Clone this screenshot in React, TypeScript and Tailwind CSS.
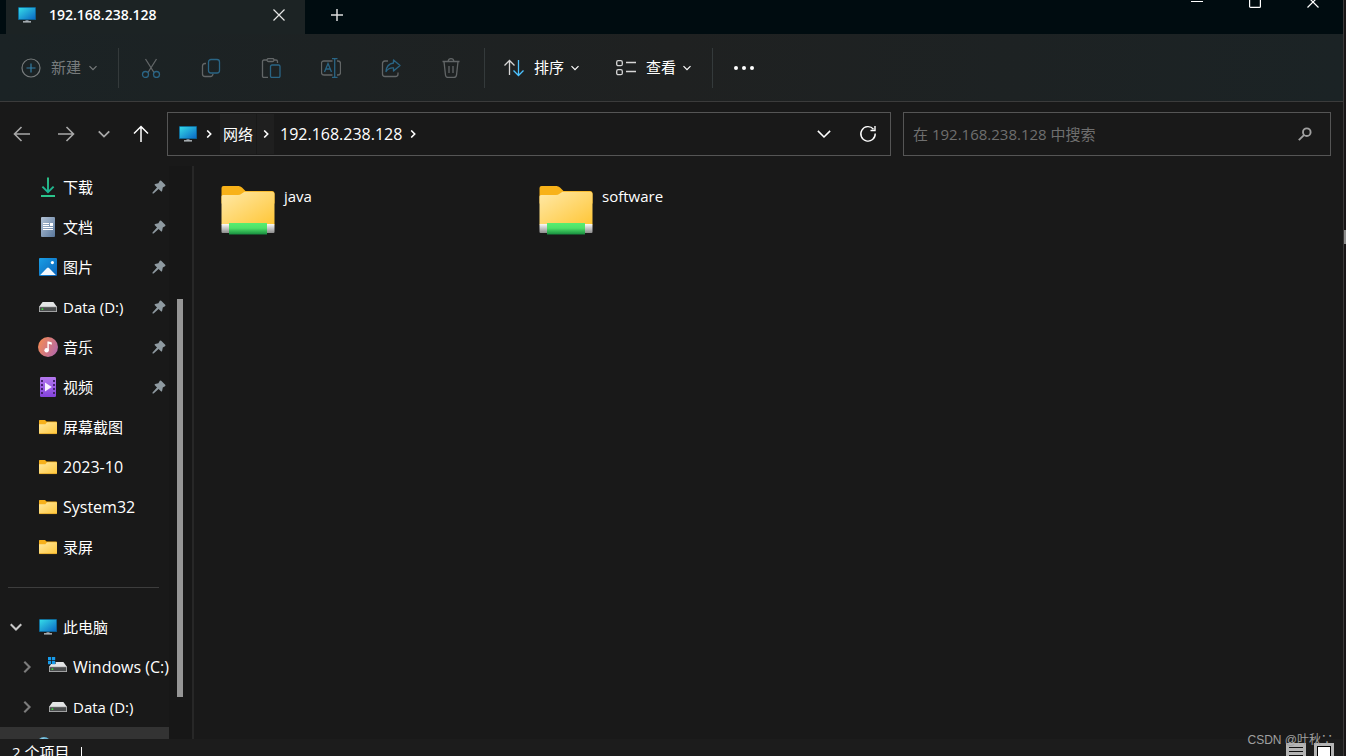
import type { ReactNode } from "react";

interface PlaceItem {
  id: string;
  label: string;
  icon: ReactNode;
  pinned?: boolean;
  latin?: boolean;
}

const MonitorIcon = () => (
  <svg width="20" height="20" viewBox="0 0 20 20" className="shrink-0">
    <defs>
      <linearGradient id="screen" x1="0" y1="0" x2="1" y2="1">
        <stop offset="0" stopColor="#35dbe8" />
        <stop offset="1" stopColor="#0a68c4" />
      </linearGradient>
    </defs>
    <rect x="1" y="2" width="18" height="13" rx="0.6" fill="#0b5a86" />
    <rect x="1.8" y="2.8" width="16.4" height="11.4" fill="url(#screen)" />
    <path d="M8.5 15h3v1.5h-3z" fill="#76818a" />
    <path d="M6 16.2h8v1.3H6z" fill="#c3cace" />
  </svg>
);

const FolderIcon = () => (
  <svg width="20" height="20" viewBox="0 0 20 20" className="shrink-0">
    <defs>
      <linearGradient id="folder" x1="0" y1="0" x2="1" y2="1">
        <stop offset="0" stopColor="#ffe9a3" />
        <stop offset="1" stopColor="#ffc73a" />
      </linearGradient>
    </defs>
    <path d="M1 3.6Q1 3 1.6 3H7l1.6 1.6H18q1 0 1 1V9H1z" fill="#f7b01b" />
    <path d="M1 7.2h6.4L9 5.2h9.2q.8 0 .8.8v10.2q0 .8-.8.8H1.8q-.8 0-.8-.8z" fill="url(#folder)" />
    <path d="M1.4 16.6h17.2" stroke="#e3a72a" strokeWidth="0.8" />
  </svg>
);

const DriveIcon = ({ system = false }: { system?: boolean }) => (
  <svg width="20" height="20" viewBox="0 0 20 20" className="shrink-0 overflow-visible">
    <path d="M4.6 5h10.8l3.6 5H1z" fill="#e4e5e6" />
    <rect x="1" y="9.6" width="18" height="5.4" rx="0.5" fill="#b5b6b7" />
    <rect x="1.8" y="10.2" width="16.4" height="4" fill="#4a4c4d" />
    <rect x="3.6" y="11.4" width="1.6" height="1.6" fill="#3be03b" />
    {system && (
      <>
        <path d="M-1-1h8.6v8H-1z" fill="#191919" />
        <path d="M0 0h3.2v3.2H0zM4 0h3.2v3.2H4zM0 4h3.2v3.2H0zM4 4h3.2v3.2H4z" fill="#179bea" />
      </>
    )}
  </svg>
);

const DownloadIcon = () => (
  <svg width="20" height="20" viewBox="0 0 20 20" fill="none" className="shrink-0">
    <defs>
      <linearGradient id="download" x1="0" y1="0" x2="0" y2="20" gradientUnits="userSpaceOnUse">
        <stop offset="0" stopColor="#2fc489" />
        <stop offset="1" stopColor="#14ad94" />
      </linearGradient>
    </defs>
    <path d="M10 .5v15M4.4 9.6 10 15.2l5.6-5.6" stroke="url(#download)" strokeWidth="1.9" />
    <path d="M3 19h14" stroke="#2bc48c" strokeWidth="2" />
  </svg>
);

const DocumentIcon = () => (
  <svg width="20" height="20" viewBox="0 0 20 20" className="shrink-0">
    <defs>
      <linearGradient id="doc" x1="0" y1="0" x2="1" y2="1">
        <stop offset="0" stopColor="#b3c3d6" />
        <stop offset="1" stopColor="#59779c" />
      </linearGradient>
    </defs>
    <rect x="3" y="0" width="14" height="20" rx="1" fill="url(#doc)" />
    <path d="M5 6h6v1H5zM5 8h6v1H5zM12 6h3v3h-3zM5 10h10v1H5zM5 12h10v1H5z" fill="#fff" />
  </svg>
);

const PictureIcon = () => (
  <svg width="20" height="20" viewBox="0 0 20 20" className="shrink-0">
    <defs>
      <linearGradient id="picture" x1="0" y1="0" x2="1" y2="1">
        <stop offset="0" stopColor="#1a9fe6" />
        <stop offset="1" stopColor="#0a62b8" />
      </linearGradient>
    </defs>
    <rect x="1" y="1" width="18" height="18" rx="1" fill="url(#picture)" />
    <path d="M2.2 18 9 11q1-1 2 0l6.8 7z" fill="#f1f7fd" />
    <circle cx="14.4" cy="5.6" r="1.6" fill="#fff" />
  </svg>
);

const MusicIcon = () => (
  <svg width="20" height="20" viewBox="0 0 20 20" className="shrink-0">
    <defs>
      <linearGradient id="music" x1="0" y1="0.3" x2="1" y2="0.8">
        <stop offset="0" stopColor="#f28a57" />
        <stop offset="1" stopColor="#b267ac" />
      </linearGradient>
    </defs>
    <circle cx="10" cy="10" r="10" fill="url(#music)" />
    <circle cx="8.6" cy="13.2" r="2.2" fill="#fff" />
    <path d="M9.4 13.2V4.5h1.4l3 1v2.3l-3-1v6.4z" fill="#fff" />
  </svg>
);

const VideoIcon = () => (
  <svg width="20" height="20" viewBox="0 0 20 20" className="shrink-0">
    <defs>
      <linearGradient id="video" x1="0" y1="0" x2="0" y2="1">
        <stop offset="0" stopColor="#b478ee" />
        <stop offset="1" stopColor="#8443dc" />
      </linearGradient>
    </defs>
    <rect x="2" y="0" width="16" height="20" rx="1.2" fill="url(#video)" />
    <path
      d="M3 3h2v2H3zM3 7h2v2H3zM3 11h2v2H3zM3 15h2v2H3zM15 3h2v2h-2zM15 7h2v2h-2zM15 11h2v2h-2zM15 15h2v2h-2z"
      fill="#45226f"
    />
    <path d="M7 5.6v8.8l6.8-4.4z" fill="#f6effd" />
  </svg>
);

const PinIcon = () => (
  <svg width="14" height="14" viewBox="0 0 14 14" className="shrink-0" fill="#8f9aa1">
    <path d="M7.8.8q.7-.7 1.4 0l4 4q.7.8-.2 1.4L10.8 7.6l-.7 3.3q-.3 1.1-1.2.3L6.6 9 1.6 13.5H.5v-1.1L5 7.4 2.8 5.2q-.7-.9.3-1.2l3.3-.7z" />
  </svg>
);

const Chevron = ({ direction, size = 8, weight = 1.2 }: { direction: "down" | "right"; size?: number; weight?: number }) => (
  <svg width={size} height={size} viewBox="0 0 8 8" fill="none" stroke="currentColor" strokeWidth={weight} className="shrink-0">
    <path d={direction === "down" ? "M.5 2.2 4 5.7 7.5 2.2" : "M2.2.5 5.7 4 2.2 7.5"} />
  </svg>
);

const NetworkFolder = () => (
  <svg width="54" height="50" viewBox="0 0 54 50" className="shrink-0">
    <defs>
      <linearGradient id="netFolder" x1="0" y1="0" x2="1" y2="1">
        <stop offset="0" stopColor="#ffe9a8" />
        <stop offset="1" stopColor="#ffc636" />
      </linearGradient>
      <linearGradient id="tube" x1="0" y1="0" x2="0" y2="1">
        <stop offset="0" stopColor="#fafafa" />
        <stop offset="1" stopColor="#8d8d8d" />
      </linearGradient>
      <linearGradient id="cable" x1="0" y1="0" x2="0" y2="1">
        <stop offset="0" stopColor="#58ee70" />
        <stop offset="0.45" stopColor="#4fe069" />
        <stop offset="1" stopColor="#168c3e" />
      </linearGradient>
    </defs>
    <path d="M.5 3q0-2 2-2h15q2 0 3.500 1.500L24.500 6H51q2.500 0 2.500 2.500v10H.5z" fill="#f8b219" />
    <path d="M.5 11.500Q.5 10 2 10h15q2 0 3.500-1.200L23.500 6.800H51q2.500 0 2.500 2.500V40H.5z" fill="url(#netFolder)" />
    <rect x="0.5" y="39" width="53" height="9" rx="1" fill="url(#tube)" />
    <rect x="8" y="38" width="38" height="11.5" fill="url(#cable)" />
  </svg>
);

const quickAccess: PlaceItem[] = [
  { id: "downloads", label: "下载", icon: <DownloadIcon />, pinned: true },
  { id: "documents", label: "文档", icon: <DocumentIcon />, pinned: true },
  { id: "pictures", label: "图片", icon: <PictureIcon />, pinned: true },
  { id: "data", label: "Data (D:)", icon: <DriveIcon />, pinned: true },
  { id: "music", label: "音乐", icon: <MusicIcon />, pinned: true },
  { id: "videos", label: "视频", icon: <VideoIcon />, pinned: true },
  { id: "screenshots", label: "屏幕截图", icon: <FolderIcon /> },
  { id: "2023-10", label: "2023-10", icon: <FolderIcon />, latin: true },
  { id: "system32", label: "System32", icon: <FolderIcon />, latin: true },
  { id: "recordings", label: "录屏", icon: <FolderIcon /> },
];

const drives: PlaceItem[] = [
  { id: "c", label: "Windows (C:)", icon: <DriveIcon system />, latin: true },
  { id: "d", label: "Data (D:)", icon: <DriveIcon /> },
];

const folders = ["java", "software"];

// Disabled commands, grey strokes with a dim blue accent
const commands = [
  {
    label: "剪切",
    art: (
      <>
        <path d="M4.5 1 13 14.5M15.5 1 7 14.5" />
        <g stroke="#2a6585">
          <circle cx="4.5" cy="16.5" r="3" />
          <circle cx="15.5" cy="16.5" r="3" />
        </g>
      </>
    ),
  },
  {
    label: "复制",
    art: (
      <>
        <path d="M5 5.5H4Q1.5 5.5 1.5 8v8q0 2.500 2.500 2.500h5.500q2.200 0 2.500-2.500" />
        <rect x="7.5" y="1.5" width="11" height="13.5" rx="2.5" stroke="#2a6585" />
      </>
    ),
  },
  {
    label: "粘贴",
    art: (
      <>
        <path d="M7 19.500H3q-1.500 0-1.500-1.500V3.500Q1.500 2 3 2h3M13 2h2q1.500 0 1.500 1.500V5" />
        <rect x="6" y="0.5" width="7" height="3" rx="1.5" />
        <rect x="9.5" y="7" width="9.5" height="12.5" rx="1.5" stroke="#2a6585" />
      </>
    ),
  },
  {
    label: "重命名",
    art: (
      <>
        <path d="M11.500 3H3Q.5 3 .5 5.500v9Q.5 17 3 17h8.500M16 3h1q2.500 0 2.500 2.500v9q0 2.500-2.500 2.500h-1" />
        <path d="M3.500 14 7 5.500l3.500 8.500M4.800 11h4.500M11 .5h5.500M11 19.500h5.500M13.700.5v19" stroke="#2a6585" />
      </>
    ),
  },
  {
    label: "共享",
    art: (
      <>
        <path d="M7 3H4Q1.500 3 1.500 5.500V16q0 2.500 2.500 2.500h10.500q2.500 0 2.500-2.500v-1.500" />
        <path d="M12.500 2 19 7.500 12.500 13v-3q-4.500-.5-7.500 3.500.5-7.500 7.500-8.500z" stroke="#2a6585" strokeLinejoin="round" />
      </>
    ),
  },
  {
    label: "删除",
    art: (
      <path d="M1.500 3.500h17M7 3.500Q7.500.7 10 .7t3 2.800M3 3.500l1.500 13.700q.3 2.300 2.500 2.300h6q2.200 0 2.500-2.300L17 3.500M8 8v7M12 8v7" />
    ),
  },
];

const Separator = () => <div className="mr-0.5 h-10 w-px bg-[#343a3b]" />;

const TitleBar = () => (
  <header className="flex h-[34px] shrink-0 bg-[#000c10] pl-1.5">
    <div className="flex w-[299px] items-center bg-[#1c2324] pb-1 pl-[11px] pr-4">
      <MonitorIcon />
      <span className="ml-3 text-sm font-semibold">192.168.238.128</span>
      <button aria-label="关闭标签页" className="ml-auto flex size-5 items-center justify-center">
        <svg width="12" height="12" viewBox="0 0 12 12" stroke="#e6e6e6" strokeWidth="1.2">
          <path d="M.5.5l11 11M11.5.5l-11 11" />
        </svg>
      </button>
    </div>
    <button aria-label="新建标签页" className="ml-[22px] flex w-5 items-center justify-center pb-1">
      <svg width="12" height="12" viewBox="0 0 12 12" stroke="#dcdcdc" strokeWidth="1.5">
        <path d="M6 0v12M0 6h12" />
      </svg>
    </button>
    <div className="-mt-1 ml-auto flex items-start pr-px">
      <button aria-label="最小化" className="flex w-[58px] justify-center">
        <svg width="12" height="12" viewBox="0 0 12 12" stroke="#fff">
          <path d="M0 5.5h12" />
        </svg>
      </button>
      <button aria-label="最大化" className="flex w-[58px] justify-center">
        <svg width="12" height="12" viewBox="0 0 12 12" fill="none" stroke="#fff" strokeWidth="1.2">
          <rect x="0.6" y="0.6" width="10.8" height="10.8" rx="1" />
        </svg>
      </button>
      <button aria-label="关闭" className="flex w-[58px] justify-center">
        <svg width="12" height="12" viewBox="0 0 12 12" stroke="#fff" strokeWidth="1.2">
          <path d="M.5.5l11 11M11.5.5l-11 11" />
        </svg>
      </button>
    </div>
  </header>
);

const Toolbar = () => (
  <div className="flex h-[68px] shrink-0 items-center border-b border-[#3b3b3b] bg-linear-to-r from-[#1b2325] via-[#1f2121] to-[#1b2325] text-[15px]">
    <button disabled className="flex items-center px-[21px] text-[#777b7c]">
      <svg width="20" height="20" viewBox="0 0 20 20" fill="none" stroke="currentColor" strokeWidth="1.2">
        <circle cx="10" cy="10" r="9" />
        <path d="M10 5.5v9M5.5 10h9" stroke="#347da3" />
      </svg>
      <span className="ml-2.5 mr-2">新建</span>
      <Chevron direction="down" />
    </button>
    <Separator />
    <div className="flex pr-[3px]">
      {commands.map((command) => (
        <button key={command.label} disabled aria-label={command.label} className="flex w-15 justify-center">
          <svg width="20" height="20" viewBox="0 0 20 20" fill="none" stroke="#626667" strokeWidth="1.3">
            {command.art}
          </svg>
        </button>
      ))}
    </div>
    <Separator />
    <button className="flex items-center px-[17px]">
      <svg width="20" height="20" viewBox="0 0 20 20" fill="none" stroke="#d6d6d6" strokeWidth="1.3">
        <path d="M5.5 17V2.5M.5 7.5l5-5 5 5" />
        <path d="M14.5 2v15.5M9.500 12.500l5 5 5-5" stroke="#4cc2ff" />
      </svg>
      <span className="ml-2.5 mr-[7px]">排序</span>
      <Chevron direction="down" />
    </button>
    <button className="flex items-center pl-5 pr-[21px]">
      <svg width="20" height="20" viewBox="0 0 20 20" fill="none" stroke="#d6d6d6" strokeWidth="1.3">
        <rect x="0.7" y="2.7" width="5.6" height="5" rx="1.5" />
        <rect x="0.7" y="11.7" width="5.6" height="5" rx="1.5" />
        <path d="M10 4.5h10M10 13.5h10" />
      </svg>
      <span className="ml-2.5 mr-[7px]">查看</span>
      <Chevron direction="down" />
    </button>
    <Separator />
    <button aria-label="查看更多" className="flex w-[58px] justify-center">
      <svg width="22" height="6" viewBox="0 0 22 6" fill="#fff">
        <circle cx="3" cy="3" r="2" />
        <circle cx="11" cy="3" r="2" />
        <circle cx="19" cy="3" r="2" />
      </svg>
    </button>
  </div>
);

const NavigationBar = () => (
  <div className="flex h-16 shrink-0 items-center pr-3">
    <button aria-label="后退" className="flex w-11 justify-center text-[#a8a8a8]">
      <svg width="18" height="18" viewBox="0 0 18 18" fill="none" stroke="currentColor" strokeWidth="1.6">
        <path d="M17 9H1.5M8.5 2l-7 7 7 7" />
      </svg>
    </button>
    <button aria-label="前进" className="flex w-11 justify-center text-[#a8a8a8]">
      <svg width="18" height="18" viewBox="0 0 18 18" fill="none" stroke="currentColor" strokeWidth="1.6">
        <path d="M1 9h15.5M9.5 2l7 7-7 7" />
      </svg>
    </button>
    <button aria-label="最近位置" className="flex w-8 justify-center text-[#a8a8a8]">
      <Chevron direction="down" size={12} />
    </button>
    <button aria-label="上移" className="flex w-[42px] justify-center">
      <svg width="18" height="18" viewBox="0 0 18 18" fill="none" stroke="currentColor" strokeWidth="1.5">
        <path d="M9 17V1.5M2 8.5l7-7 7 7" />
      </svg>
    </button>
    <div className="ml-[5px] grid flex-1 grid-cols-[724fr_428fr] gap-3">
      <div className="flex h-11 items-center border border-[#555] pl-2.5">
        <MonitorIcon />
        <span className="flex w-[22px] justify-center">
          <Chevron direction="right" weight={1.6} />
        </span>
        <a href="#network" className="flex h-10 items-center bg-[#1f1f1f] px-[3px] text-[15px]">
          网络
        </a>
        <button aria-label="展开网络" className="ml-px flex h-10 w-[17px] items-center justify-center bg-[#1f1f1f]">
          <Chevron direction="right" weight={1.6} />
        </button>
        <a href="#host" className="ml-1.5 text-base">
          192.168.238.128
        </a>
        <span className="ml-[7px]">
          <Chevron direction="right" weight={1.6} />
        </span>
        <button aria-label="历史记录" className="ml-auto flex w-11 justify-center">
          <Chevron direction="down" size={14} weight={0.9} />
        </button>
        <button aria-label="刷新" className="flex w-11 justify-center">
          <svg width="18" height="18" viewBox="0 0 18 18" fill="none" stroke="currentColor" strokeWidth="1.4">
            <path d="M16.2 8.5A7.2 7.2 0 1 1 14.5 4.2M16 1v4.5h-4.5" />
          </svg>
        </button>
      </div>
      <label className="flex h-11 items-center border border-[#555] pl-[9px] pr-[18px]">
        <input
          type="text"
          aria-label="搜索"
          placeholder="在 192.168.238.128 中搜索"
          className="min-w-0 flex-1 bg-transparent text-[15px] outline-none placeholder:text-[#6f6f6f]"
        />
        <svg width="14" height="14" viewBox="0 0 14 14" fill="none" stroke="#a0a0a0" strokeWidth="1.9">
          <circle cx="8.8" cy="5.2" r="3.8" />
          <path d="M6.2 7.8.8 13.2" />
        </svg>
      </label>
    </div>
  </div>
);

const Sidebar = () => (
  <nav className="flex w-[194px] shrink-0 overflow-hidden border-r-2 border-[#272727]">
    <div className="w-[169px] shrink-0 pt-px">
      {quickAccess.map((item) => (
        <a
          key={item.id}
          href={`#${item.id}`}
          className={`flex h-10 items-center whitespace-nowrap pl-[38px] pr-[3px] ${item.latin ? "text-base" : "text-[15px]"}`}
        >
          {item.icon}
          <span className="ml-[5px] flex-1">{item.label}</span>
          {item.pinned && <PinIcon />}
        </a>
      ))}
      <div className="flex h-10 items-center pl-2 pr-2.5">
        <div className="h-px w-full bg-[#3d3d3d]" />
      </div>
      <div className="flex h-10 items-center text-[15px]">
        <button aria-label="折叠此电脑" className="flex w-8 justify-center text-[#c8c8c8]">
          <Chevron direction="down" size={12} weight={1.4} />
        </button>
        <a href="#pc" className="ml-1.5 flex items-center">
          <MonitorIcon />
          <span className="ml-[5px]">此电脑</span>
        </a>
      </div>
      {drives.map((drive) => (
        <div key={drive.id} className="flex h-10 items-center">
          <button aria-label={`展开 ${drive.label}`} className="ml-[15px] flex w-6 justify-center text-[#7c7c7c]">
            <Chevron direction="right" size={12} weight={1.4} />
          </button>
          <a
            href={`#drive-${drive.id}`}
            className={`ml-[9px] flex items-center whitespace-nowrap ${drive.latin ? "text-base" : "text-[15px]"}`}
          >
            {drive.icon}
            <span className="ml-[5px]">{drive.label}</span>
          </a>
        </div>
      ))}
      <div className="flex h-10 items-start bg-[#333] pl-[38px] pt-2.5">
        <svg width="14" height="14" viewBox="0 0 14 14">
          <circle cx="6" cy="7" r="7" fill="#6bb6d6" />
          <path d="M2 2.5q3-2 5 0L5 6z" fill="#d9eef5" />
        </svg>
      </div>
    </div>
    <div className="flex flex-1 flex-col bg-[#171717] pl-2">
      <div className="flex-[133]" />
      <div className="w-1.5 flex-[398] bg-[#969696]" />
      <div className="flex-[42]" />
    </div>
  </nav>
);

const StatusBar = () => (
  <footer className="relative flex h-[17px] shrink-0 items-start bg-[#1c1c1c] pl-3 pr-[9px]">
    <span className="mt-px whitespace-nowrap text-[15px] leading-6">2 个项目</span>
    <span className="ml-3 mt-2 h-4 w-px bg-white" />
    <div className="ml-auto mt-1 flex gap-2">
      <button aria-label="详细信息" className="h-5">
        <svg width="20" height="20" viewBox="0 0 20 20">
          <rect width="20" height="20" fill="#b4b4b4" />
          <path d="M3 4.5h14M3 8.5h14M3 12.5h14" stroke="#111" strokeWidth="1.2" />
        </svg>
      </button>
      <button aria-label="大缩略图" className="h-5">
        <svg width="20" height="20" viewBox="0 0 20 20">
          <rect width="20" height="20" fill="#b4b4b4" />
          <rect x="3.5" y="3.5" width="13" height="13" fill="#fff" stroke="#000" />
        </svg>
      </button>
    </div>
    <span className="absolute -top-[7px] right-2.5 whitespace-nowrap text-xs leading-4 text-[#a0a0a0] [font-family:'Liberation_Sans','Noto_Sans_CJK_SC',sans-serif]">
      CSDN @叶秋∵
    </span>
  </footer>
);

const App = () => {
  return (
    <div className="flex h-screen overflow-hidden bg-[#191919] text-white [font-family:'Open_Sans','Noto_Sans_CJK_SC',sans-serif]">
      <div className="flex min-w-0 flex-1 flex-col">
        <TitleBar />
        <Toolbar />
        <NavigationBar />
        <div className="flex min-h-0 flex-1">
          <Sidebar />
          <main className="grid flex-1 grid-cols-[repeat(auto-fill,318px)] content-start pl-[27px] pt-[19px]">
            {folders.map((name) => (
              <a key={name} href={`#${name}`} className="flex items-start text-[15px] leading-[22px]">
                <NetworkFolder />
                <span className="ml-[9px]">{name}</span>
              </a>
            ))}
          </main>
        </div>
        <StatusBar />
      </div>
      <div className="w-[3px] shrink-0 border-l border-[#3a3838] bg-[#181516] pt-[230px]">
        <div className="h-3.5 w-0.5 bg-[#8a8a8a]" />
      </div>
    </div>
  );
};

export default App;
